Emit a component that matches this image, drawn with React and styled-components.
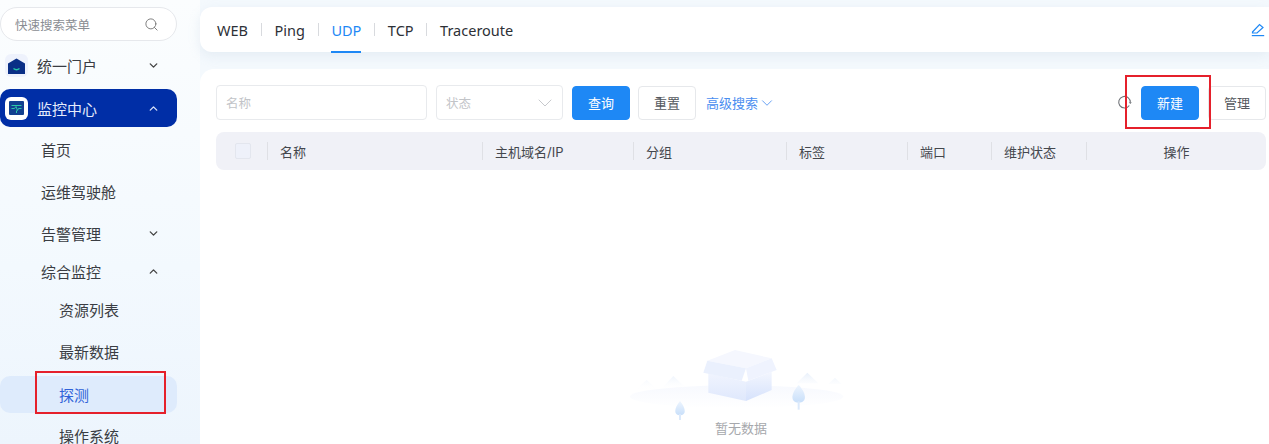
import React from 'react'
import styled, { createGlobalStyle } from 'styled-components'
import { Search, ChevronDown, ChevronUp } from 'lucide-react'

const GlobalStyle = createGlobalStyle`
    html, body {
        margin: 0;
        height: 444px;
        overflow: hidden;
        background: #f4f9fd;
        font-family: Inter, "Noto Sans CJK SC", sans-serif;
    }
`

const Page = styled.div`
    position: relative;
    display: flex;
    width: 1269px;
    height: 444px;
    overflow: hidden;
`

const Sidebar = styled.aside`
    flex: 0 0 200px;
    height: 444px;
    padding-top: 7px;
    box-sizing: border-box;
    background: linear-gradient(180deg, #fbfdfe 0%, #f3f9fe 60%, #edf5fd 100%);
`

const SearchBox = styled.div`
    display: flex;
    align-items: center;
    justify-content: space-between;
    width: 177px;
    height: 34px;
    margin-bottom: 4px;
    padding: 0 17px 0 14px;
    box-sizing: border-box;
    background: #fff;
    border: 1px solid #e6e8ec;
    border-radius: 17px;
    font-size: 12.5px;
    color: #8a8d93;
`

const MenuRow = styled.div`
    display: flex;
    align-items: center;
    justify-content: space-between;
    width: 177px;
    height: ${p => p.$h || 42}px;
    margin-top: ${p => p.$mt || 0}px;
    padding-left: ${p => p.$indent}px;
    padding-right: 17px;
    box-sizing: border-box;
    font-size: 15px;
    color: ${p => p.$color || '#3a3d43'};
    background: ${p => p.$bg || 'transparent'};
    border-radius: 10px;
`

const Label = styled.span`
    display: flex;
    align-items: center;
    gap: 9px;
`

const LogoTile = styled.span`
    display: flex;
    align-items: center;
    justify-content: center;
    width: 23px;
    height: 23px;
    margin-left: 5px;
    border-radius: 6px;
    background: ${p => p.$bg};
`

const Main = styled.main`
    flex: 1;
    display: flex;
    flex-direction: column;
    padding-top: 7px;
    gap: 17px;
    min-width: 0;
`

const TabBar = styled.div`
    display: flex;
    align-items: center;
    justify-content: space-between;
    height: 45px;
    padding: 0 4px 0 17px;
    background: #fff;
    border-radius: 12px 0 0 12px;
    box-shadow: 0 4px 12px rgba(210, 222, 236, 0.45);
`

const Tabs = styled.div`
    display: flex;
    align-items: center;
    height: 100%;
`

const Tab = styled.div`
    position: relative;
    display: flex;
    align-items: center;
    height: 100%;
    font-family: "Noto Sans", sans-serif;
    font-size: 14.5px;
    color: ${p => (p.$active ? '#1e88f5' : '#2d3036')};
    &::after {
        content: '';
        display: ${p => (p.$active ? 'block' : 'none')};
        position: absolute;
        left: 0;
        right: 0;
        bottom: -1px;
        height: 2px;
        background: #1e88f5;
    }
`

const TabSep = styled.span`
    width: 1px;
    height: 13px;
    margin: 0 12.75px;
    background: #d8dade;
`

const Card = styled.section`
    flex: 1;
    padding: 16px 3px 0 16px;
    background: #fff;
    border-radius: 14px 0 0 0;
`

const Toolbar = styled.div`
    display: flex;
    align-items: center;
    height: 35px;
`

const Field = styled.div`
    display: flex;
    align-items: center;
    justify-content: space-between;
    width: ${p => p.$w}px;
    height: 35px;
    margin-right: ${p => p.$mr}px;
    padding: 0 10px 0 9px;
    box-sizing: border-box;
    border: 1px solid #e8eaed;
    border-radius: 4px;
    font-size: 12.5px;
    color: #c2c4c8;
`

const SelectArrow = styled(ChevronDown)`
    margin-right: -5px;
`

const Btn = styled.button`
    width: 58px;
    height: 34px;
    margin-right: ${p => p.$mr || 0}px;
    margin-left: ${p => p.$ml || 0}px;
    padding: 0;
    font-family: inherit;
    font-size: 13px;
    border-radius: 4px;
    border: 1px solid ${p => (p.$primary ? '#1e88f5' : '#e6e8eb')};
    background: ${p => (p.$primary ? '#1e88f5' : '#fff')};
    color: ${p => (p.$primary ? '#fff' : '#55585e')};
`

const AdvLink = styled.span`
    display: flex;
    align-items: center;
    font-size: 13px;
    color: #4a8ef0;
`

const Spacer = styled.div`
    flex: 1;
`

const TableHead = styled.div`
    display: grid;
    grid-template-columns: 51px 215px 151px 153px 121px 84px 95px 180px;
    align-items: center;
    height: 38px;
    margin-top: 12px;
    background: #f0f1f7;
    border-radius: 8px;
    font-size: 13px;
    color: #44474d;
`

const HeadCell = styled.div`
    display: flex;
    align-items: center;
    justify-content: ${p => (p.$center ? 'center' : 'flex-start')};
    height: 18px;
    padding-left: ${p => (p.$center || p.$first ? 0 : 12)}px;
    border-left: ${p => (p.$first ? 'none' : '1px solid #dfe0e5')};
`

const CheckBox = styled.span`
    width: 14px;
    height: 14px;
    margin-left: 19px;
    border: 1px solid #e3e6ee;
    border-radius: 2px;
    background: #eef1fa;
`

const Empty = styled.div`
    display: flex;
    flex-direction: column;
    align-items: center;
    margin-top: 170px;
`

const EmptyText = styled.div`
    font-size: 13px;
    line-height: 17px;
    color: #a6a8ac;
`

// red annotation boxes drawn on top of the screenshot
const RedBox = styled.div`
    position: absolute;
    left: ${p => p.$x}px;
    top: ${p => p.$y}px;
    width: ${p => p.$w}px;
    height: ${p => p.$h}px;
    box-sizing: border-box;
    border: 2px solid #e5202b;
`

const PortalIcon = () => (
  <svg width="17" height="16" viewBox="0 0 17 16">
    <path d="M8.5 0.5 L17 5.5 V16 H0 V5.5 Z" fill="#0a2f86" />
    <path d="M5.5 10.5 Q8.5 13 11.5 10.5" stroke="#25c7a5" strokeWidth="1.4" fill="none" />
  </svg>
)

const MonitorIcon = () => (
  <svg width="15" height="14" viewBox="0 0 15 14">
    <rect width="15" height="14" rx="1" fill="#12408f" />
    <path d="M2.5 4.5 H12.5 M2.5 7.5 H5.5 L7 5.5 L8.5 9.5 L9.5 7.5 H12.5 M7.5 9.5 V12" stroke="#2cc7a8" strokeWidth="1" fill="none" />
  </svg>
)

const EditIcon = () => (
  <svg width="14" height="14" viewBox="0 0 14 14" fill="none" stroke="#1e88f5" strokeWidth="1.2">
    <path d="M1.5 9 L8.5 1.5 L12 4.5 L6 10 H1.5 Z" />
    <path d="M0.8 12.6 H13.2" />
  </svg>
)

const RefreshIcon = () => (
  <svg width="15" height="15" viewBox="0 0 15 15" fill="none" stroke="#6f7277" strokeWidth="1.1">
    <path d="M12.3 10.5 A5.8 5.8 0 1 1 13.3 7.5" />
    <path d="M11.8 7.2 L14.8 7.2 L13.3 9 Z" fill="#6f7277" stroke="none" />
  </svg>
)

const EmptyArt = () => (
  <svg width="242" height="80" viewBox="0 0 726 240">
    <defs>
      <linearGradient id="hill" x1="0" y1="0" x2="0" y2="1">
        <stop offset="0" stopColor="#e8f0fb" />
        <stop offset="1" stopColor="#ffffff" stopOpacity="0" />
      </linearGradient>
      <linearGradient id="leftFace" x1="0" y1="0" x2="0" y2="1">
        <stop offset="0" stopColor="#f0f4fe" />
        <stop offset="1" stopColor="#dfe8fc" />
      </linearGradient>
      <linearGradient id="rightFace" x1="0" y1="0" x2="0" y2="1">
        <stop offset="0" stopColor="#f3f6fe" />
        <stop offset="1" stopColor="#d6e2fc" />
      </linearGradient>
      <linearGradient id="tree" x1="0" y1="0" x2="0" y2="1">
        <stop offset="0" stopColor="#eef5fe" />
        <stop offset="1" stopColor="#c8dffa" />
      </linearGradient>
      <linearGradient id="ground" x1="0" y1="0" x2="0" y2="1">
        <stop offset="0" stopColor="#f7f9fe" />
        <stop offset="1" stopColor="#ffffff" />
      </linearGradient>
    </defs>
    <ellipse cx="350" cy="170" rx="320" ry="34" fill="url(#ground)" />
    <path d="M45 150 L80 120 L115 150 Z M120 150 L160 108 L205 150 Z M530 130 L562 98 L595 130 Z M625 132 L645 113 L665 132 Z" fill="url(#hill)" />
    <path d="M265 100 L378 125 V183 L265 158 Z" fill="url(#leftFace)" />
    <path d="M378 125 L455 95 V150 L378 183 Z" fill="url(#rightFace)" />
    <path d="M262 62 L345 30 L455 55 L378 85 Z" fill="#f5f7fe" />
    <path d="M262 62 L378 85 L365 122 L250 98 Z" fill="#eaf0fd" />
    <path d="M455 55 L470 90 L385 122 L378 85 Z" fill="#eff3fe" />
    <path d="M180 183 C162 205 160 226 180 226 C200 226 198 205 180 183 Z" fill="url(#tree)" />
    <rect x="177" y="222" width="6" height="20" fill="#dbe9fb" />
    <path d="M536 135 C512 160 510 188 536 188 C562 188 560 160 536 135 Z" fill="url(#tree)" />
    <rect x="533" y="184" width="6" height="25" fill="#dbe9fb" />
  </svg>
)

const tabs = ['WEB', 'Ping', 'UDP', 'TCP', 'Traceroute']
const columns = ['名称', '主机域名/IP', '分组', '标签', '端口', '维护状态']

const App = () => {
  return (
    <Page>
      <GlobalStyle />
      <Sidebar>
        <SearchBox>
          快速搜索菜单
          <Search size={15} color="#777" strokeWidth={1.5} />
        </SearchBox>
        <MenuRow $h={41}>
          <Label>
            <LogoTile $bg="#eef2fc"><PortalIcon /></LogoTile>
            统一门户
          </Label>
          <ChevronDown size={13} strokeWidth={2.5} color="#444" />
        </MenuRow>
        <MenuRow $h={38} $mt={3} $bg="#002ea6" $color="#e4ebfb">
          <Label>
            <LogoTile $bg="#fff"><MonitorIcon /></LogoTile>
            监控中心
          </Label>
          <ChevronUp size={13} strokeWidth={2.5} color="#d8e2f8" />
        </MenuRow>
        <MenuRow $indent={41} $mt={1}>首页</MenuRow>
        <MenuRow $indent={41}>运维驾驶舱</MenuRow>
        <MenuRow $indent={41}>
          告警管理
          <ChevronDown size={13} strokeWidth={2.5} color="#444" />
        </MenuRow>
        <MenuRow $indent={41} $h={34}>
          综合监控
          <ChevronUp size={13} strokeWidth={2.5} color="#444" />
        </MenuRow>
        <MenuRow $indent={59}>资源列表</MenuRow>
        <MenuRow $indent={59}>最新数据</MenuRow>
        <MenuRow $indent={59} $h={37} $mt={4} $bg="#deebfc" $color="#2f62d8">探测</MenuRow>
        <MenuRow $indent={59} $h={44}>操作系统</MenuRow>
      </Sidebar>
      <Main>
        <TabBar>
          <Tabs>
            {tabs.map((t, i) => (
              <React.Fragment key={t}>
                {i > 0 && <TabSep />}
                <Tab $active={t === 'UDP'}>{t}</Tab>
              </React.Fragment>
            ))}
          </Tabs>
          <EditIcon />
        </TabBar>
        <Card>
          <Toolbar>
            <Field $w={211} $mr={9}>名称</Field>
            <Field $w={127} $mr={9}>
              状态
              <SelectArrow size={24} strokeWidth={0.8} color="#b9bbc0" />
            </Field>
            <Btn $primary $mr={8}>查询</Btn>
            <Btn $mr={10}>重置</Btn>
            <AdvLink>
              高级搜索
              <ChevronDown size={18} strokeWidth={1.1} />
            </AdvLink>
            <Spacer />
            <RefreshIcon />
            <Btn $primary $ml={9} $mr={9}>新建</Btn>
            <Btn>管理</Btn>
          </Toolbar>
          <TableHead>
            <HeadCell $first><CheckBox /></HeadCell>
            {columns.map(c => <HeadCell key={c}>{c}</HeadCell>)}
            <HeadCell $center>操作</HeadCell>
          </TableHead>
          <Empty>
            <EmptyArt />
            <EmptyText>暂无数据</EmptyText>
          </Empty>
        </Card>
      </Main>
      <RedBox $x={1125} $y={75} $w={86} $h={54} />
      <RedBox $x={35} $y={371} $w={131} $h={43} />
    </Page>
  )
}

export default App
